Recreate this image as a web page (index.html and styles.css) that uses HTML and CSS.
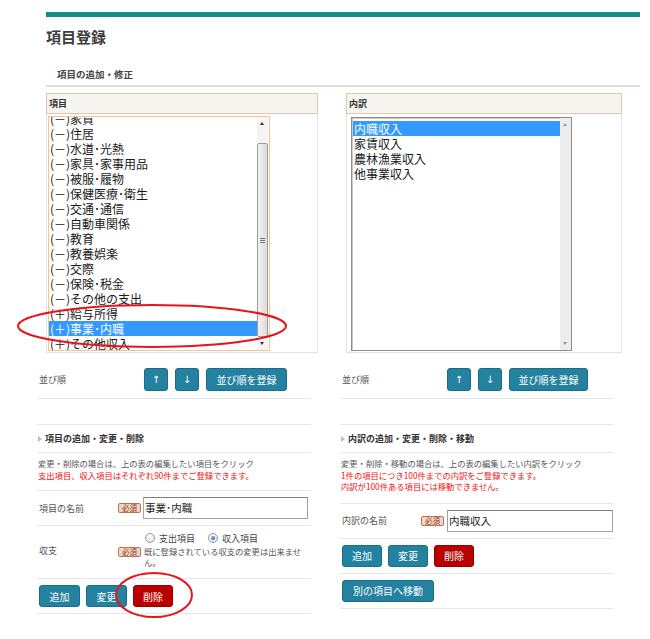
FILE: index.html
```html
<!DOCTYPE html>
<html lang="ja">
<head>
<meta charset="utf-8">
<title>項目登録</title>
<link rel="stylesheet" href="styles.css">
</head>
<body>
<div class="page">
  <div class="topbar"></div>
  <h1 class="title">項目登録</h1>
  <h2 class="subtitle">項目の追加・修正</h2>
  <div class="rule"></div>

  <div class="panels">
    <div class="panel panel-left">
      <div class="panel-head">項目</div>
      <div class="panel-body panel-body-l">
        <div class="listbox listbox-focus">
          <div class="list-items">
            <div class="list-scroll">
              <div class="opt">(－)食料</div>
              <div class="opt">(－)家賃</div>
              <div class="opt">(－)住居</div>
              <div class="opt">(－)水道･光熱</div>
              <div class="opt">(－)家具･家事用品</div>
              <div class="opt">(－)被服･履物</div>
              <div class="opt">(－)保健医療･衛生</div>
              <div class="opt">(－)交通･通信</div>
              <div class="opt">(－)自動車関係</div>
              <div class="opt">(－)教育</div>
              <div class="opt">(－)教養娯楽</div>
              <div class="opt">(－)交際</div>
              <div class="opt">(－)保険･税金</div>
              <div class="opt">(－)その他の支出</div>
              <div class="opt">(＋)給与所得</div>
              <div class="opt opt-selected">(＋)事業･内職</div>
              <div class="opt">(＋)その他収入</div>
            </div>
          </div>
          <div class="vscroll">
            <span class="arr arr-up"></span>
            <span class="track">
              <span class="thumb"><span class="grip"></span></span>
            </span>
            <span class="arr arr-down"></span>
          </div>
        </div>
      </div>
    </div>

    <div class="panel panel-right">
      <div class="panel-head">内訳</div>
      <div class="panel-body panel-body-r">
        <div class="listbox listbox-plain">
          <div class="list-items list-pad">
            <div class="opt opt-selected">内職収入</div>
            <div class="opt">家賃収入</div>
            <div class="opt">農林漁業収入</div>
            <div class="opt">他事業収入</div>
          </div>
          <div class="vscroll vscroll-off">
            <span class="arr arr-up arr-light"></span>
            <span class="track"></span>
            <span class="arr arr-down arr-light"></span>
          </div>
        </div>
      </div>
    </div>
  </div>

  <div class="columns">
    <section class="col col-left">
      <div class="row sort-row">
        <span class="label sort-label">並び順</span>
        <span class="btn btn-sq">↑</span>
        <span class="btn btn-sq">↓</span>
        <span class="btn btn-sort">並び順を登録</span>
      </div>
      <div class="row spacer"></div>
      <div class="row head-row"><span class="tri"></span>項目の追加・変更・削除</div>
      <div class="row info-row">
        <p class="info">変更・削除の場合は、上の表の編集したい項目をクリック</p>
        <p class="info info-red">支出項目、収入項目はそれぞれ90件までご登録できます。</p>
      </div>
      <div class="row field-row">
        <span class="label field-label">項目の名前</span>
        <span class="badge">必須</span>
        <span class="input">事業･内職</span>
      </div>
      <div class="row radio-row">
        <span class="label field-label">収支</span>
        <div class="radio-body">
          <div class="radio-line">
            <span class="radio"></span><span class="radio-text">支出項目</span>
            <span class="radio radio-on"></span><span class="radio-text">収入項目</span>
          </div>
          <div class="note-line">
            <span class="badge">必須</span>
            <span class="note">既に登録されている収支の変更は出来ません。</span>
          </div>
        </div>
      </div>
      <div class="row btn-row">
        <span class="btn btn-act btn-w41">追加</span>
        <span class="btn btn-act btn-w41">変更</span>
        <span class="btn btn-act btn-red btn-w40">削除</span>
      </div>
    </section>

    <section class="col col-right">
      <div class="row sort-row">
        <span class="label sort-label">並び順</span>
        <span class="btn btn-sq">↑</span>
        <span class="btn btn-sq">↓</span>
        <span class="btn btn-sort btn-sort-r">並び順を登録</span>
      </div>
      <div class="row spacer"></div>
      <div class="row head-row"><span class="tri"></span>内訳の追加・変更・削除・移動</div>
      <div class="row info-row info-row-r">
        <p class="info">変更・削除・移動の場合は、上の表の編集したい内訳をクリック</p>
        <p class="info info-red">1件の項目につき100件までの内訳をご登録できます。</p>
        <p class="info info-red">内訳が100件ある項目には移動できません。</p>
      </div>
      <div class="row field-row">
        <span class="label field-label">内訳の名前</span>
        <span class="badge">必須</span>
        <span class="input input-r">内職収入</span>
      </div>
      <div class="row btn-row">
        <span class="btn btn-act btn-w40">追加</span>
        <span class="btn btn-act btn-w40">変更</span>
        <span class="btn btn-act btn-red btn-w40">削除</span>
      </div>
      <div class="row btn-row">
        <span class="btn btn-act btn-move">別の項目へ移動</span>
      </div>
    </section>
  </div>

  <svg class="annot" width="650" height="639" viewBox="0 0 650 639" aria-hidden="true">
    <ellipse cx="152" cy="326" rx="134" ry="21" fill="none" stroke="#e8141b" stroke-width="2"/>
    <ellipse cx="154" cy="595" rx="38" ry="22" fill="none" stroke="#e8141b" stroke-width="2"/>
  </svg>
</div>
</body>
</html>
```

FILE: styles.css
```css
* { box-sizing: border-box; }

html, body {
  margin: 0;
  padding: 0;
  background: #ffffff;
}

body {
  font-family: "Noto Sans CJK JP", "Noto Sans", sans-serif;
  color: #333;
}

.page {
  position: relative;
  width: 650px;
  height: 639px;
  overflow: hidden;
}

.topbar {
  margin: 12px 10px 0 46px;
  height: 5px;
  background: #138d87;
}

.title {
  margin: 11px 0 0 46px;
  font-size: 15px;
  line-height: 18px;
  font-weight: bold;
  color: #3d3d3d;
}

.subtitle {
  margin: 22px 0 0 57px;
  font-size: 9.5px;
  line-height: 12px;
  font-weight: bold;
  color: #444;
}

.rule {
  margin: 5px 10px 0 46px;
  height: 2px;
  background: #e6dedb;
}

/* ---------- panels ---------- */
.panels {
  display: flex;
  align-items: flex-start;
  gap: 28px;
  margin: 6px 0 0 46px;
}

.panel-left { width: 272px; }
.panel-right { width: 276px; }

.panel-head {
  height: 21px;
  border: 1px solid #dccab0;
  background: #f7f5ef;
  font-size: 9px;
  line-height: 19px;
  font-weight: bold;
  color: #333;
  padding-left: 2px;
}

.panel-body {
  height: 239px;
  border: 1px solid #e4e4e4;
  border-top: none;
}

.panel-body-l { padding: 2px 0 0 1px; }
.panel-body-r { padding: 3px 0 0 4px; }

.listbox {
  display: flex;
  background: #fff;
}

.listbox-focus {
  width: 222px;
  height: 235px;
  border: 1px solid #f6c48b;
}

.listbox-plain {
  width: 221px;
  height: 234px;
  border: 1px solid #8e8e8e;
  box-shadow: inset 1px 1px 0 #c9c9c9;
}

.list-items {
  flex: 1;
  overflow: hidden;
}

.list-pad { padding: 3px 0 0 1px; }

.list-scroll { margin-top: -21px; }

.opt {
  height: 15px;
  font-size: 12px;
  line-height: 15px;
  color: #1a1a1a;
  padding-left: 1px;
  white-space: nowrap;
}

.opt-selected {
  background: #3399ff;
  color: #fff;
}

/* ---------- scrollbars ---------- */
.vscroll {
  width: 11px;
  margin-right: 1px;
  display: flex;
  flex-direction: column;
  background: #f4f4f4;
}

.vscroll-off {
  margin-right: 0;
  background: #ededed;
}

.arr {
  height: 13px;
  position: relative;
  flex: none;
}

.arr::after {
  content: "";
  position: absolute;
  left: 3px;
  top: 5px;
  border-left: 2.5px solid transparent;
  border-right: 2.5px solid transparent;
}

.arr-up::after { border-bottom: 3px solid #333; }
.arr-down::after { border-top: 3px solid #333; }
.arr-light.arr-up::after { border-bottom-color: #9a9a9a; }
.arr-light.arr-down::after { border-top-color: #9a9a9a; }

.track {
  flex: 1;
  position: relative;
  padding-top: 13px;
}

.thumb {
  display: block;
  height: 194px;
  border: 1px solid #9b9b9b;
  border-radius: 2px;
  background: linear-gradient(to right, #f2f2f2, #dcdcdc);
  position: relative;
}

.grip {
  position: absolute;
  left: 2px;
  right: 2px;
  top: 94px;
  height: 5px;
  border-top: 1px solid #777;
  border-bottom: 1px solid #777;
}

.grip::after {
  content: "";
  position: absolute;
  left: 0;
  right: 0;
  top: 1px;
  height: 1px;
  background: #777;
}

/* ---------- lower columns ---------- */
.columns {
  display: flex;
  gap: 29px;
  margin-left: 37px;
}

.col-left { width: 274px; }
.col-right { width: 273px; }

.row {
  border-bottom: 1px solid #e7e7e7;
  padding-left: 2px;
}

.label {
  font-size: 9px;
  color: #555;
}

.sort-row {
  display: flex;
  align-items: center;
  padding-top: 15px;
  padding-bottom: 7px;
}

.sort-label { width: 105px; }

.spacer { height: 26px; }

.head-row {
  display: flex;
  align-items: center;
  height: 28px;
  padding-left: 1px;
  font-size: 9px;
  font-weight: bold;
  color: #333;
}

.tri {
  width: 0;
  height: 0;
  border-left: 4px solid #bdbdbd;
  border-top: 3px solid transparent;
  border-bottom: 3px solid transparent;
  margin-right: 3px;
}

.info-row { padding: 5px 0 9px 1px; }
.info-row-r { padding-bottom: 10px; }

.info {
  margin: 0;
  font-size: 8.3px;
  line-height: 11.5px;
  color: #555;
  white-space: nowrap;
}

.info-red { color: #f01010; }

.field-row {
  display: flex;
  align-items: center;
  padding-top: 6px;
  padding-bottom: 6px;
}

.field-label {
  width: 79px;
  flex: none;
}

.badge {
  display: inline-block;
  flex: none;
  width: 23px;
  height: 10px;
  border: 1px solid #b8744f;
  border-radius: 2px;
  background: #f3d5c5;
  color: #8a3b1c;
  font-size: 7.5px;
  line-height: 8px;
  text-align: center;
}

.input {
  display: block;
  width: 165px;
  height: 22px;
  margin-left: 2px;
  border: 1px solid #a3a3a3;
  border-top-color: #7f7f7f;
  background: #fff;
  font-size: 10.5px;
  line-height: 20px;
  color: #1a1a1a;
  padding-left: 1px;
}

.input-r {
  width: 166px;
  margin-left: 3px;
}

.radio-row {
  display: flex;
  align-items: center;
  padding-top: 6px;
  padding-bottom: 10px;
}

.radio-body {
  display: flex;
  flex-direction: column;
}

.radio-line {
  display: flex;
  align-items: center;
  height: 12px;
  padding-left: 27px;
}

.radio {
  width: 10px;
  height: 10px;
  border-radius: 50%;
  border: 1px solid #9a9a9a;
  background: radial-gradient(circle at 40% 35%, #ffffff, #dedede);
  position: relative;
  flex: none;
}

.radio-on::after {
  content: "";
  position: absolute;
  left: 2px;
  top: 2px;
  width: 4px;
  height: 4px;
  border-radius: 50%;
  background: radial-gradient(circle at 35% 35%, #7fb2ef, #1d4f9c);
}

.radio-text {
  font-size: 9px;
  color: #444;
  margin-left: 4px;
  margin-right: 13px;
}

.note-line {
  display: flex;
  align-items: flex-start;
  margin-top: 2px;
}

.note-line .badge { margin-top: 1px; }

.note {
  display: block;
  width: 162px;
  margin-left: 3px;
  font-size: 8.3px;
  line-height: 11px;
  color: #555;
}

.btn-row {
  display: flex;
  gap: 6px;
  padding-top: 6px;
  padding-bottom: 6px;
}

.btn {
  display: inline-flex;
  align-items: center;
  justify-content: center;
  flex: none;
  background: #24819f;
  border: 1px solid #1b6c87;
  border-radius: 3px;
  color: #fff;
  font-size: 10px;
}

.btn-sq {
  width: 24px;
  height: 23px;
  margin-right: 7px;
  font-family: "DejaVu Sans", sans-serif;
  font-size: 10px;
}

.btn-sort {
  width: 81px;
  height: 23px;
}

.btn-sort-r { width: 79px; }

.btn-act { height: 22px; }
.btn-w41 { width: 41px; }
.btn-w40 { width: 40px; }
.btn-move { width: 92px; }

.btn-red {
  background: #b80000;
  border-color: #960000;
}

.annot {
  position: absolute;
  left: 0;
  top: 0;
  pointer-events: none;
}
```
